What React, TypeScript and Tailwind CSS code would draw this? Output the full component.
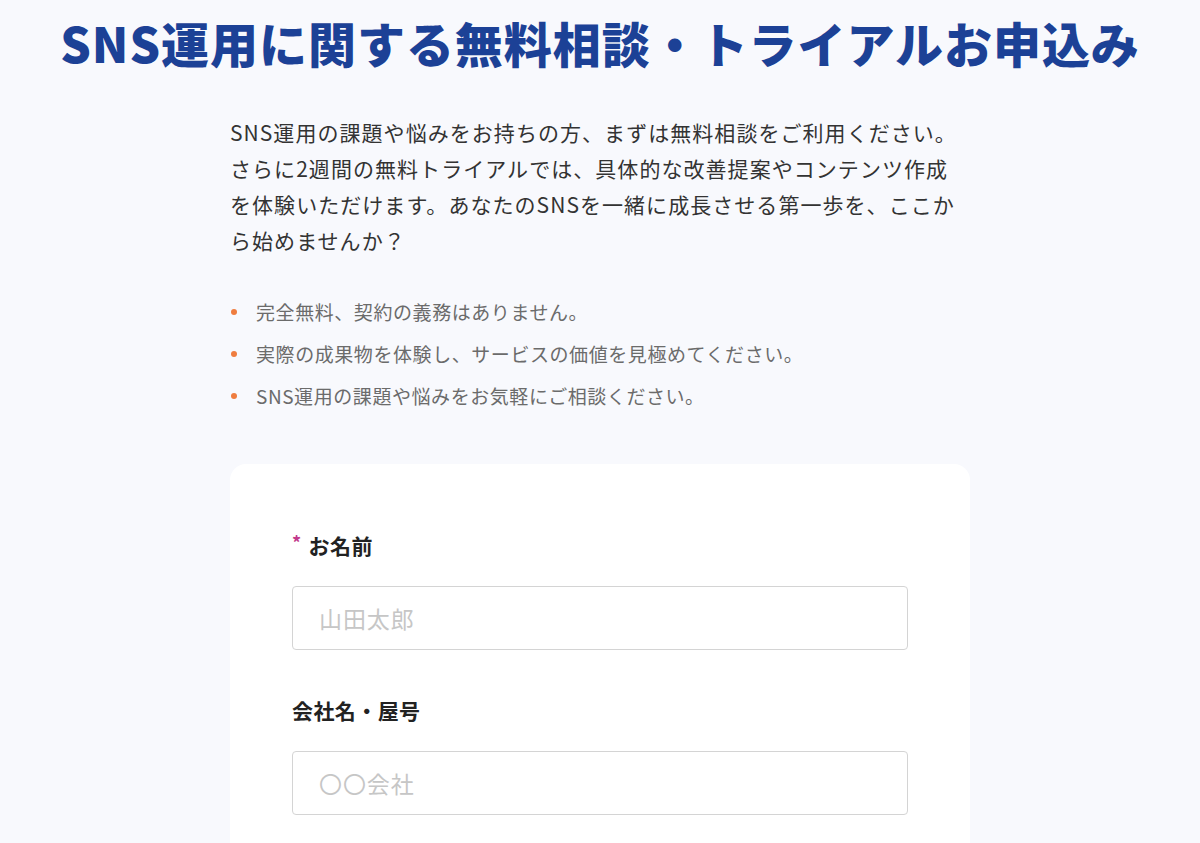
import type { ReactNode } from "react";

const font = {
  fontFamily: '"Noto Sans CJK JP", "Noto Sans", sans-serif',
};

const points = [
  "完全無料、契約の義務はありません。",
  "実際の成果物を体験し、サービスの価値を見極めてください。",
  "SNS運用の課題や悩みをお気軽にご相談ください。",
];

function Field({
  label,
  placeholder,
  required,
}: {
  label: string;
  placeholder: string;
  required?: boolean;
}) {
  return (
    <div className="flex flex-col">
      <label className="flex items-center gap-[7px] text-[21px] font-bold leading-[30px] tracking-[0.02em] text-[#222]">
        {required && (
          <span className="-mt-1.5 text-[18px] font-bold text-[#c2398c]">*</span>
        )}
        {label}
      </label>
      <input
        type="text"
        placeholder={placeholder}
        className="mt-[26px] h-[64px] w-full rounded-[4px] border border-[#d4d4d4] bg-white px-[26px] text-[23px] tracking-[0.04em] text-[#333] outline-none placeholder:text-[#c6c6c6]"
        style={font}
      />
    </div>
  );
}

function Line({ children }: { children: ReactNode }) {
  return <span className="block whitespace-nowrap">{children}</span>;
}

export default function App() {
  return (
    <div className="min-h-screen bg-[#f8f9fd]" style={font}>
      <h1 className="pt-3 text-center text-[48px] font-black leading-[60px] tracking-[0.02em] text-[#1c4196]">
        SNS運用に関する無料相談・トライアルお申込み
      </h1>

      <div className="mx-auto mt-[42px] w-[740px]">
        <p className="text-[21px] leading-[36px] tracking-[0.05em] text-[#333]">
          <Line>SNS運用の課題や悩みをお持ちの方、まずは無料相談をご利用ください。</Line>
          <Line>さらに2週間の無料トライアルでは、具体的な改善提案やコンテンツ作成</Line>
          <Line>を体験いただけます。あなたのSNSを一緒に成長させる第一歩を、ここか</Line>
          <Line>ら始めませんか？</Line>
        </p>

        <ul className="mt-[33px] flex flex-col">
          {points.map((p) => (
            <li
              key={p}
              className="flex items-center gap-[19px] text-[19px] leading-[42px] tracking-[0.03em] text-[#6b6b6b]"
            >
              <span className="ml-px h-1.5 w-1.5 shrink-0 rounded-full bg-[#ef7d3f]" />
              {p}
            </li>
          ))}
        </ul>

        <form className="mt-[47px] flex flex-col gap-[45px] rounded-2xl bg-white px-[62px] pb-16 pt-[66px]">
          <Field label="お名前" placeholder="山田太郎" required />
          <Field label="会社名・屋号" placeholder="〇〇会社" />
        </form>
      </div>
    </div>
  );
}
